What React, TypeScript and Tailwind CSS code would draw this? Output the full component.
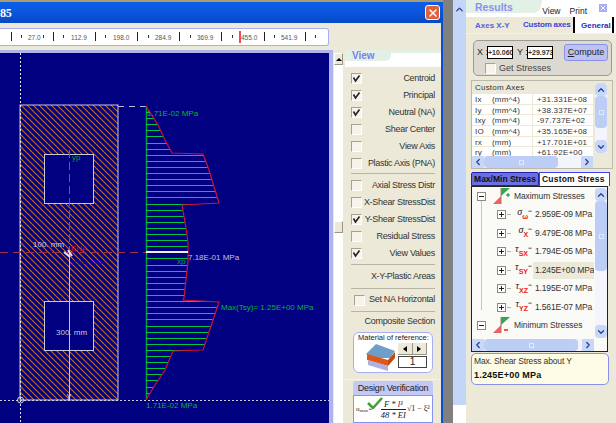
import { ChevronUp, ChevronDown, ChevronLeft, ChevronRight, X } from "lucide-react";

const profile: [number, number][] = [
  [106, 146], [125, 158], [140, 165], [153, 172], [154, 203], [170, 209], [190, 215], [203, 219],
  [205, 182], [228, 186], [243, 188], [252, 188], [262, 188], [280, 186], [298, 184], [300, 183],
  [302, 219], [320, 213], [335, 208], [350, 203], [351, 173], [370, 165], [385, 155], [400, 146],
];

const profileX = (y: number) => {
  for (let i = 0; i < profile.length - 1; i++) {
    const [y0, x0] = profile[i];
    const [y1, x1] = profile[i + 1];
    if (y >= y0 && y <= y1) return x0 + ((y - y0) / (y1 - y0)) * (x1 - x0);
  }
  return 146;
};

const hatchY = Array.from({ length: 47 }, (_, i) => Math.round(112 + i * 6.1) + 0.5);

const Canvas = () => (
  <svg viewBox="0 53 329 370" className="block w-[329px] h-[370px]" fontFamily="Liberation Sans, Arial, sans-serif">
    <defs>
      <pattern id="hatch" width="6" height="6" patternUnits="userSpaceOnUse">
        <path d="M-1 5 L1 7 M0 0 L6 6 M5 -1 L7 1" stroke="#c26a2a" strokeWidth="1.1" />
      </pattern>
    </defs>
    <rect x="0" y="53" width="329" height="370" fill="#000080" />
    <rect x="20" y="105" width="98" height="295" fill="url(#hatch)" stroke="#c8c8d8" />
    <rect x="44.5" y="154.5" width="49" height="49" fill="#000080" stroke="#c8c8d8" />
    <rect x="44.5" y="301.5" width="49" height="49" fill="#000080" stroke="#c8c8d8" />
    <path d="M20.5 53 V105 M20.5 105 V400 M20.5 400 V423" stroke="#e6e6ee" strokeDasharray="2 2" />
    <path d="M0 400.5 H329" stroke="#d0d0e0" strokeDasharray="2 2" />
    <path d="M118 106.5 H146" stroke="#b8b8d8" strokeDasharray="6 5" />
    <circle cx="20.5" cy="400" r="3" fill="none" stroke="#d8d8e0" />
    <path d="M69.5 150 V252" stroke="#0a9a3a" strokeDasharray="8 4" />
    <path d="M69.5 252 V400" stroke="#c0c8d8" />
    <path d="M0 252.5 H146" stroke="#a03050" strokeDasharray="8 5" />
    <path d="M146.5 106 V400" stroke="#00a040" strokeWidth="1.5" />
    {hatchY.map((y) => (
      <path key={y} d={`M146 ${y} H${profileX(y)}`} stroke="#00c840" />
    ))}
    <path d={"M" + profile.map(([y, x]) => `${x} ${y}`).join(" L")} fill="none" stroke="#d01030" strokeWidth="1.2" />
    <path d="M146 252 H188" stroke="#f0f0e0" strokeWidth="2" />
    <path d="M64 252 L70 257 M68 250 L72 256" stroke="#d8e0ff" strokeWidth="2" />
    <text x="147" y="116" fontSize="8" fill="#00b830">1.71E-02 MPa</text>
    <text x="72" y="160" fontSize="8" fill="#00a030">yp</text>
    <text x="33" y="247" fontSize="8" fill="#c8c8e0">100. mm</text>
    <text x="71" y="251" fontSize="8" fill="#d01030">ENA</text>
    <text x="72" y="265" fontSize="7.5" fill="#0000d0">XNA YNA</text>
    <text x="188" y="260" fontSize="8" fill="#c0c0e0">7.18E-01 MPa</text>
    <text x="177" y="264" fontSize="8" fill="#00a030">xp</text>
    <text x="221" y="310" fontSize="8" fill="#00b830">Max(Tsy)= 1.25E+00 MPa</text>
    <text x="56" y="335" fontSize="8" fill="#c8c8e0">300. mm</text>
    <text x="67" y="398" fontSize="8" fill="#e0e0e0">y</text>
    <text x="146" y="408" fontSize="8" fill="#00b830">1.71E-02 MPa</text>
  </svg>
);

const rulerLabels: [number, string][] = [
  [28, "27.0"], [71, "112.9"], [113, "198.0"], [155, "284.9"], [197, "369.9"], [241, "455.0"], [281, "541.9"],
];

const Ruler = () => (
  <svg viewBox="0 0 328 17" className="block w-[328px] h-[17px]" fontFamily="Liberation Sans, Arial, sans-serif">
    {[11, 53, 95, 137, 179, 221, 264, 305].map((x) => (
      <path key={x} d={`M${x}.5 4 V13`} stroke="#222" />
    ))}
    {[21, 43, 63, 105, 148, 190, 232, 274, 315].map((x) => (
      <path key={x} d={`M${x}.5 7 V10`} stroke="#333" />
    ))}
    {rulerLabels.map(([x, t]) => (
      <text key={t} x={x} y="11.5" fontSize="6.5" fill="#555">{t}</text>
    ))}
    <path d="M240 3 V15" stroke="#f01010" strokeWidth="1.5" />
  </svg>
);

const Check = ({ on = false }: { on?: boolean }) => (
  <span className="flex items-center justify-center w-[11px] h-[11px] bg-[#f6f4ea] border border-t-[#a5a292] border-l-[#a5a292] border-r-white border-b-white shrink-0">
    {on && (
      <svg viewBox="0 0 9 9" className="w-[9px] h-[9px]">
        <path d="M1.5 3.5 L3.5 7 L7.5 1.5" fill="none" stroke="#222" strokeWidth="1.6" />
      </svg>
    )}
  </span>
);

const ViewRow = ({ label, on }: { label: string; on?: boolean }) => (
  <div className="flex items-center justify-between h-[17px] pl-[6px] pr-[6px]">
    <Check on={on} />
    <span className="text-[9px] tracking-[-0.3px] text-[#333] whitespace-nowrap">{label}</span>
  </div>
);

const Sep = () => <div className="h-px bg-[#b8b5a5] mx-[6px]" />;

const VScroll = ({ thumb, height }: { thumb: number; height: number }) => (
  <div className="w-[12px] flex flex-col bg-[#f4f4fc] shrink-0" style={{ height }}>
    <div className="h-[13px] bg-[#c8d6f8] flex items-center justify-center rounded-sm shrink-0">
      <ChevronUp size={10} strokeWidth={3} className="text-[#2a3f90]" />
    </div>
    <div className="flex-1 min-h-0">
      <div className="bg-[#bccdf6] rounded-sm flex items-center justify-center" style={{ height: thumb }}>
        <div className="w-[5px] h-[5px] border border-[#dfe8ff]" />
      </div>
    </div>
    <div className="h-[13px] bg-[#c8d6f8] flex items-center justify-center rounded-sm shrink-0">
      <ChevronDown size={10} strokeWidth={3} className="text-[#2a3f90]" />
    </div>
  </div>
);

const HScroll = ({ thumb }: { thumb: number }) => (
  <div className="h-[12px] flex bg-[#f4f4fc] shrink-0">
    <div className="w-[12px] bg-[#c8d6f8] flex items-center justify-center shrink-0">
      <ChevronLeft size={10} strokeWidth={3} className="text-[#2a3f90]" />
    </div>
    <div className="flex-1">
      <div className="h-full bg-[#bccdf6] rounded-sm flex items-center justify-center" style={{ width: thumb }}>
        <div className="w-[5px] h-[5px] border border-[#dfe8ff]" />
      </div>
    </div>
    <div className="w-[12px] bg-[#c8d6f8] flex items-center justify-center shrink-0">
      <ChevronRight size={10} strokeWidth={3} className="text-[#2a3f90]" />
    </div>
  </div>
);

const axesRows = [
  ["Ix", "(mm^4)", "+31.331E+08"],
  ["Iy", "(mm^4)", "+38.337E+07"],
  ["Ixy", "(mm^4)", "-97.737E+02"],
  ["IO", "(mm^4)", "+35.165E+08"],
  ["rx", "(mm)", "+17.701E+01"],
  ["ry", "(mm)", "+61.92E+00"],
];

const stressRows: [string, string, string, boolean?][] = [
  ["σ", "ω", "2.959E-09 MPa"],
  ["σ", "X", "9.479E-08 MPa"],
  ["τ", "SX", "1.794E-05 MPa"],
  ["τ", "SY", "1.245E+00 MPa", true],
  ["τ", "XZ", "1.195E-07 MPa"],
  ["τ", "YZ", "1.561E-07 MPa"],
];

const TreeBox = ({ minus }: { minus?: boolean }) => (
  <span className="relative flex items-center justify-center w-[9px] h-[9px] border border-[#8a8a80] bg-white shrink-0">
    <span className="w-[5px] h-px bg-[#222]" />
    {!minus && <span className="absolute w-px h-[5px] bg-[#222]" />}
  </span>
);

const TriIcon = ({ plus }: { plus?: boolean }) => (
  <svg viewBox="0 0 18 17" className="w-[18px] h-[17px] shrink-0">
    <path d="M8 8 L8 0 L17 0 Z" fill="#2fa84f" />
    <path d="M8 8 L8 16 L0 16 Z" fill="#f06060" />
    <path d="M8 0 V16" stroke="#c07070" />
    {plus ? (
      <path d="M13 7 H17 M15 5 V9" stroke="#108030" />
    ) : (
      <path d="M11 13 H15" stroke="#e02020" strokeWidth="1.5" />
    )}
  </svg>
);

const StressRow = ({ sym, sub, val, sel }: { sym: string; sub: string; val: string; sel?: boolean }) => (
  <div className="flex items-center h-[18.5px] pl-[25px]">
    <TreeBox />
    <span className="w-[4px] h-px bg-[#b8b5a5] ml-px shrink-0" />
    <span className="flex items-start w-[22px] justify-end pr-[1px] font-['Liberation_Serif',serif] italic leading-none shrink-0">
      <span className="text-[10px] text-[#222] -mt-[3px]">{sym}</span>
      <span className="text-[7px] text-[#ee2020] not-italic font-['Liberation_Sans',sans-serif] font-bold mt-[3px] leading-none">{sub}</span>
      <span className="text-[7px] text-[#333] not-italic -mt-[2px]">=</span>
    </span>
    <span className={`text-[8.5px] tracking-[-0.15px] text-[#333] whitespace-nowrap pl-[2px] leading-[17px] flex-1 ${sel ? "bg-[#ece9d8]" : ""}`}>{val}</span>
  </div>
);

export default function App() {
  return (
    <div className="flex w-[616px] h-[423px] overflow-hidden bg-[#ece9d8] font-['Liberation_Sans',Arial,sans-serif]">
      {/* main window */}
      <div className="w-[443px] flex flex-col shrink-0">
        <div className="h-[2px] bg-[#a89a72]" />
        <div className="h-[21px] bg-gradient-to-b from-[#0a5fe8] via-[#0a55dd] to-[#0748c4] flex items-center justify-between pr-[3px]">
          <span className="text-[12px] font-bold text-white font-['Liberation_Serif',serif] tracking-tight">85</span>
          <span className="w-[15px] h-[15px] rounded-[3px] bg-[#e0623c] border border-white flex items-center justify-center">
            <X size={12} strokeWidth={3} className="text-white" />
          </span>
        </div>
        <div className="flex-1 min-h-0 flex flex-col border-r-[2px] border-[#0a4fd0]">
          <div className="h-[27px] flex items-center shrink-0">
            <div className="w-[329px] h-[18px] bg-white border border-l-0 border-[#a8aef0] rounded-r-[3px] flex items-center overflow-hidden">
              <Ruler />
            </div>
          </div>
          <div className="flex-1 min-h-0 flex">
            <div className="w-[333px] border-t-[3px] border-r-[4px] border-[#aeb4ee] shrink-0 overflow-hidden">
              <Canvas />
            </div>
            <div className="w-[12px] flex flex-col pr-[2px] pl-[1px] shrink-0">
              <div className="h-[12px] mt-[3px] bg-[#ece9d8] border border-t-white border-l-white border-r-[#9a9788] border-b-[#9a9788] flex items-center justify-center">
                <span className="w-0 h-0 border-x-[3px] border-x-transparent border-b-[3px] border-b-black" />
              </div>
              <div className="flex-1 bg-white">
                <div className="h-[12px] mt-[156px] bg-[#ece9d8] border border-t-white border-l-white border-r-[#9a9788] border-b-[#9a9788]" />
              </div>
            </div>
            {/* view panel */}
            <div className="flex-1 min-w-0 flex flex-col">
              <div className="h-[17px] bg-white flex shrink-0">
                <div className="w-[46px] h-[11px] bg-[#e2f0e6] rounded-br-[6px] pl-[7px] text-[10px] leading-[11px] font-bold text-[#7a80ee]">View</div>
                <div className="flex-1 h-[3px] bg-[#e2f0e6]" />
              </div>
              <div className="pt-[3px]">
                <ViewRow label="Centroid" on />
                <ViewRow label="Principal" on />
                <ViewRow label="Neutral (NA)" on />
                <ViewRow label="Shear Center" />
                <ViewRow label="View  Axis" />
                <ViewRow label="Plastic Axis (PNA)" />
              </div>
              <div className="mt-px"><Sep /></div>
              <div className="pt-[3px] pb-[2px]">
                <ViewRow label="Axial Stress Distr" />
                <ViewRow label="X-Shear StressDist" />
                <ViewRow label="Y-Shear StressDist" on />
                <ViewRow label="Residual Stress" />
                <ViewRow label="View Values" on />
              </div>
              <Sep />
              <div className="h-[23px] flex items-center justify-end pr-[6px] text-[9px] tracking-[-0.3px] text-[#333] whitespace-nowrap">X-Y-Plastic Areas</div>
              <Sep />
              <div className="h-[22px] flex items-center justify-between pl-[9px] pr-[6px]">
                <Check />
                <span className="text-[9px] tracking-[-0.3px] text-[#333] whitespace-nowrap">Set NA Horizontal</span>
              </div>
              <Sep />
              <div className="h-[20px] flex items-center justify-end pr-[6px] text-[9px] tracking-[-0.3px] text-[#333] whitespace-nowrap">Composite Section</div>
              <div className="mx-[8px] h-[41px] bg-white border border-[#a8aef0] rounded-[6px] px-[4px] flex flex-col shrink-0">
                <div className="text-[7.5px] leading-[10px] text-[#222] whitespace-nowrap">Material of reference:</div>
                <div className="flex items-start justify-between">
                  <svg viewBox="0 0 30 28" className="w-[30px] h-[28px] ml-[8px]">
                    <path d="M0 11 L10 1 L29 8 L24 15 L6 15 Z" fill="#6f9fc8" />
                    <path d="M1 11 L22 17 V23 L1 17 Z" fill="#e0571a" />
                    <path d="M22 17 L29 9 V15 L22 23 Z" fill="#c04a14" />
                    <path d="M2 17 L22 23 V28 L2 22 Z" fill="#b0b0e0" />
                  </svg>
                  <div className="w-[29px] mr-[1px] flex flex-col">
                    <div className="flex h-[12px]">
                      <span className="flex-1 bg-[#ece9d8] border-r border-b border-[#9a9788] flex items-center justify-center">
                        <span className="w-0 h-0 border-y-[3px] border-y-transparent border-r-[4px] border-r-black" />
                      </span>
                      <span className="flex-1 bg-[#ece9d8] border-r border-b border-[#9a9788] flex items-center justify-center">
                        <span className="w-0 h-0 border-y-[3px] border-y-transparent border-l-[4px] border-l-black" />
                      </span>
                    </div>
                    <div className="h-[12px] mt-px border border-[#444] text-[10px] leading-[10px] text-center text-[#222]">1</div>
                  </div>
                </div>
              </div>
              <div className="h-[7px] border-b border-[#f6f4ea] shrink-0" />
              <div className="mx-[8px] h-[14px] bg-[#c3c8f6] rounded-t-[3px] mt-[1px] text-center text-[9px] tracking-[-0.2px] leading-[14px] text-[#222] whitespace-nowrap shrink-0">Design Verification</div>
              <div className="mx-[8px] flex-1 bg-white border border-[#8a92f0] flex items-center font-['Liberation_Serif',serif] italic text-[#222] overflow-hidden relative">
                <span className="text-[7px] ml-[2px]">u</span>
                <span className="text-[5px] mt-[3px] not-italic">max</span>
                <span className="text-[7px]">=</span>
                <span className="flex flex-col items-center text-[8.5px] leading-[10px] ml-[8px] whitespace-nowrap">
                  <span>F * l³</span>
                  <span className="border-t border-[#222]">48 * EI</span>
                </span>
                <span className="text-[8px] ml-[1px] not-italic whitespace-nowrap">√1 − ξ²</span>
                <svg viewBox="0 0 16 12" className="absolute left-[13px] top-[1px] w-[16px] h-[12px]">
                  <path d="M1 6 L6 11 L15 1" fill="none" stroke="#4a9a3a" strokeWidth="2.5" />
                </svg>
              </div>
            </div>
          </div>
        </div>
      </div>

      {/* gray gap and outer scrollbar */}
      <div className="w-[10px] bg-[#808080] shrink-0" />
      <div className="w-[13px] flex flex-col shrink-0 bg-white">
        <div className="h-[405px] bg-[#c4d6f8] flex flex-col items-center">
          <ChevronUp size={11} strokeWidth={3} className="text-[#2a3f90] mt-[4px]" />
        </div>
      </div>

      {/* results panel */}
      <div className="flex-1 min-w-0 flex flex-col">
        <div className="h-[17px] flex bg-white shrink-0">
          <div className="w-[75px] h-[13px] bg-[#e2f0e6] rounded-br-[8px] pl-[9px] text-[10.5px] leading-[14px] font-bold text-[#8a90f0]">Results</div>
          <div className="flex-1 h-[4px] bg-[#e2f0e6] flex" />
          <div className="flex items-start">
            <span className="text-[8.5px] text-[#222] mt-[6px] mr-[9px] leading-[11px]">View</span>
            <span className="text-[8.5px] text-[#222] mt-[6px] mr-[11px] leading-[11px]">Print</span>
            <span className="w-[10px] h-[10px] mt-[3px] mr-[8px] bg-[#a8aef0] border border-white flex items-center justify-center">
              <X size={8} strokeWidth={3} className="text-white" />
            </span>
          </div>
        </div>
        <div className="h-[17px] flex items-center bg-white text-[8px] font-bold shrink-0 border-b border-[#f4f2e8]">
          <span className="w-[53px] h-full bg-[#ece9d8] pl-[9px] leading-[17px] whitespace-nowrap text-[#5a60d8]">Axes X-Y</span>
          <span className="w-[56px] h-full pl-[4px] leading-[15px] whitespace-nowrap bg-[#ece9d8] border-r-2 border-black text-[#3a3fd8] tracking-[-0.2px]">Custom axes</span>
          <span className="w-[39px] h-full pl-[6px] leading-[17px] text-[#2a2fb8] border-r-2 border-black whitespace-nowrap">General</span>
        </div>

        <div className="mt-[6px] ml-[7px] mr-[4px] h-[36px] bg-[#dcdad0] border border-[#9a9a98] rounded-[5px] flex flex-col pl-[3px] pr-[3px] pt-[3px] shrink-0">
          <div className="flex items-start justify-between h-[19px]">
            <div className="flex items-center text-[9px] text-[#222] pt-[2px] whitespace-nowrap">
              <span className="w-[10px]">X :</span>
              <span className="w-[26px] h-[13px] border border-black bg-white text-[7px] leading-[11px] overflow-hidden font-bold text-[#333]">+10.060</span>
              <span className="w-[10px] ml-[4px]">Y :</span>
              <span className="w-[26px] h-[13px] border border-black bg-white text-[7px] leading-[11px] overflow-hidden font-bold text-[#333]">+29.973</span>
            </div>
            <div className="w-[44px] h-[17px] bg-[#bcc2f4] border border-[#8a90e8] rounded-[3px] text-[9px] leading-[15px] text-center text-[#222]">
              <span className="underline">C</span>ompute
            </div>
          </div>
          <div className="flex items-center pl-[8px]">
            <Check />
            <span className="text-[9px] text-[#444] ml-[3px] whitespace-nowrap">Get Stresses</span>
          </div>
        </div>

        <div className="mt-[4px] ml-[5px] mr-[3px] h-[89px] border border-[#bbb9ac] bg-[#ece9d8] flex shrink-0">
          <div className="flex-1 min-w-0 flex flex-col">
            <div className="flex-1 min-h-0 overflow-hidden">
              <div className="h-[13px] pl-[3px] text-[8px] leading-[14px] text-[#333] tracking-wide whitespace-nowrap">Custom Axes</div>
              {axesRows.map(([a, b, c]) => (
                <div key={a} className="h-[10.7px] flex text-[8px] tracking-wide leading-[11px] text-[#333] bg-white border-b border-[#ece9d8]">
                  <span className="w-[61px] border-r border-[#ece9d8] pl-[3px] flex whitespace-nowrap">
                    <span className="w-[17px]">{a}</span>
                    <span>{b}</span>
                  </span>
                  <span className="pl-[4px] whitespace-nowrap">{c}</span>
                </div>
              ))}
            </div>
            <HScroll thumb={74} />
          </div>
          <div className="pl-[2px] pr-[5px] pt-[2px]">
            <VScroll thumb={32} height={70} />
          </div>
        </div>

        <div className="mt-[3px] ml-[5px] mr-[6px] h-[14px] flex items-stretch text-[8.5px] font-bold text-[#111] shrink-0 whitespace-nowrap">
          <span className="w-[68px] bg-[#6a70e0] border border-[#2020b0] rounded-t-[2px] text-center leading-[12px]">Max/Min Stress</span>
          <span className="flex-1 bg-white border border-[#3a3ff0] border-b-0 pl-[2px] leading-[13px] tracking-[0.2px]">Custom Stress</span>
        </div>

        <div className="ml-[5px] mr-[8px] h-[166px] border border-[#222] bg-[#fafaf6] flex shrink-0">
          <div className="flex-1 min-w-0 flex flex-col">
            <div className="flex-1 min-h-0 overflow-hidden relative">
              <div className="flex items-center h-[18.5px] pl-[5px]">
                <TreeBox minus />
                <span className="ml-[7px]"><TriIcon plus /></span>
                <span className="text-[8.5px] tracking-[-0.1px] text-[#333] ml-[3px] whitespace-nowrap">Maximum Stresses</span>
              </div>
              {stressRows.map(([s, sub, v, sel]) => (
                <StressRow key={sub} sym={s} sub={sub} val={v} sel={sel} />
              ))}
              <div className="flex items-center h-[18.5px] pl-[5px]">
                <TreeBox minus />
                <span className="ml-[7px]"><TriIcon /></span>
                <span className="text-[8.5px] tracking-[-0.1px] text-[#333] ml-[3px] whitespace-nowrap">Minimum Stresses</span>
              </div>
              <div className="absolute left-[9px] top-[14px] w-px h-[109px] bg-[#c8c6b8]" />
            </div>
            <HScroll thumb={94} />
          </div>
          <div className="pl-[1px] pt-[1px]">
            <VScroll thumb={70} height={150} />
          </div>
        </div>

        <div className="mt-[1px] ml-[5px] mr-[7px] h-[32px] bg-[#fbfbe6] border border-[#8a90e8] rounded-[5px] px-[2px] shrink-0">
          <div className="text-[8.5px] tracking-[-0.15px] leading-[13px] mt-[1px] text-[#333] whitespace-nowrap">Max. Shear Stress about Y</div>
          <div className="text-[9px] leading-[14px] font-bold text-[#111] tracking-[0.2px] whitespace-nowrap">1.245E+00 MPa</div>
        </div>
      </div>
    </div>
  );
}
